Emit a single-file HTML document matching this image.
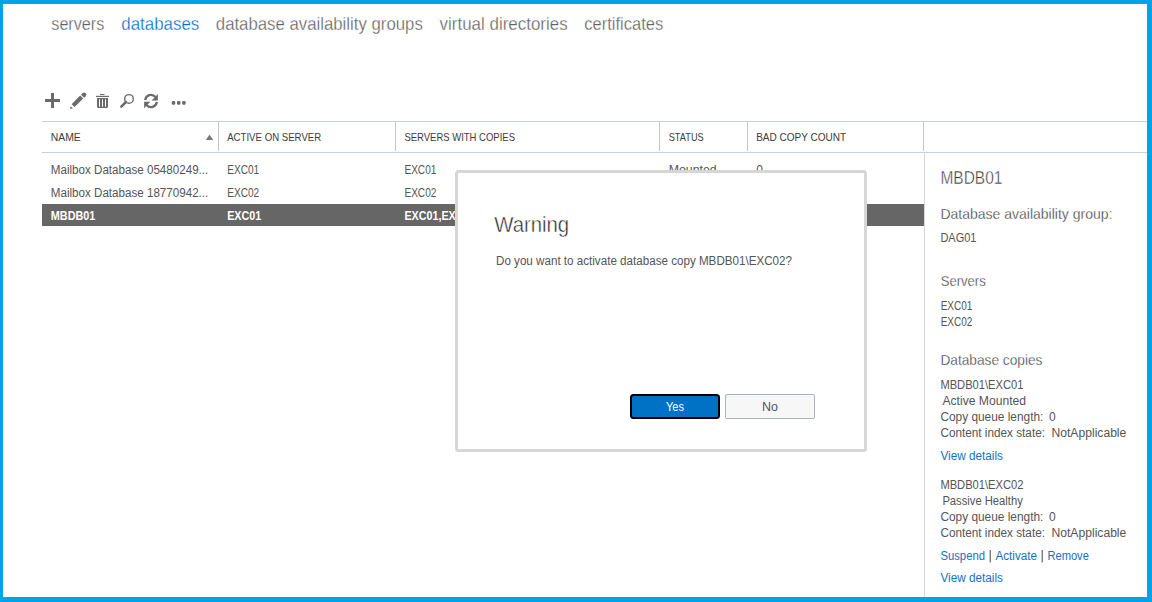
<!DOCTYPE html><html><head><meta charset="utf-8"><style>html,body{margin:0;padding:0;background:#fff;overflow:hidden}svg{display:block}text{font-family:"Liberation Sans",sans-serif;white-space:pre}</style></head><body>
<svg width="1152" height="602" viewBox="0 0 1152 602">
<rect x="0" y="0" width="1152" height="602" fill="#fff"/>
<text x="51.30" y="29.80" font-size="18" fill="#606060" stroke="#fff" stroke-width="0.3" textLength="53.01" lengthAdjust="spacingAndGlyphs" >servers</text>
<text x="121.25" y="29.80" font-size="18" fill="#006cc8" stroke="#fff" stroke-width="0.3" textLength="78.00" lengthAdjust="spacingAndGlyphs" >databases</text>
<text x="215.80" y="29.80" font-size="18" fill="#606060" stroke="#fff" stroke-width="0.3" textLength="207.01" lengthAdjust="spacingAndGlyphs" >database availability groups</text>
<text x="439.60" y="29.80" font-size="18" fill="#606060" stroke="#fff" stroke-width="0.3" textLength="128.00" lengthAdjust="spacingAndGlyphs" >virtual directories</text>
<text x="584.20" y="29.80" font-size="18" fill="#606060" stroke="#fff" stroke-width="0.3" textLength="79.01" lengthAdjust="spacingAndGlyphs" >certificates</text>
<g fill="#6b6b6b">
<rect x="45" y="99" width="15" height="3"/><rect x="51" y="93" width="3" height="15"/>
<path d="M70 109 L70.8 106.2 L72.8 108.2 Z"/>
<path d="M71.6 104.3 L80.1 95.6 L83.2 98.5 L74.6 107.1 Z"/>
<path d="M81.0 94.7 L82.4 93.3 A2.2 2.2 0 0 1 85.6 96.5 L84.1 97.8 Z"/>
<rect x="100" y="94" width="4.4" height="1"/><rect x="96" y="95.8" width="13" height="1.2"/>
<path d="M97 98 H108 V106.8 Q108 108 106.8 108 H98.2 Q97 108 97 106.8 Z M99 99.3 V106.7 H100 V99.3 Z M102 99.3 V106.7 H103 V99.3 Z M105 99.3 V106.7 H106 V99.3 Z" fill-rule="evenodd"/>
</g>
<circle cx="129" cy="98.9" r="4.3" fill="none" stroke="#6b6b6b" stroke-width="1.4"/>
<line x1="126" y1="102" x2="121.3" y2="106.6" stroke="#6b6b6b" stroke-width="2.5" stroke-linecap="round"/>
<g fill="none" stroke="#6b6b6b" stroke-width="2.3">
<path d="M145.2 100.2 A5.8 5.8 0 0 1 155.4 97"/>
<path d="M156.8 101.8 A5.8 5.8 0 0 1 146.6 105"/>
</g>
<g fill="#6b6b6b"><path d="M157.9 94 V100.5 H151.6 Z"/><path d="M144.1 108.2 V101.7 H150.4 Z"/></g>
<g fill="#6b6b6b"><rect x="171.8" y="101" width="3.4" height="3.8" rx="1.2"/><rect x="177" y="101" width="3.4" height="3.8" rx="1.2"/><rect x="182.2" y="101" width="3.4" height="3.8" rx="1.2"/></g>
<rect x="42" y="121" width="1105" height="1" fill="#c9d0d6"/>
<rect x="42" y="152" width="1105" height="1" fill="#c9d0d6"/>
<rect x="218" y="122" width="1" height="29" fill="#c6c6c6"/>
<rect x="395" y="122" width="1" height="29" fill="#c6c6c6"/>
<rect x="659" y="122" width="1" height="29" fill="#c6c6c6"/>
<rect x="747" y="122" width="1" height="29" fill="#c6c6c6"/>
<rect x="923" y="122" width="1" height="29" fill="#c6c6c6"/>
<rect x="924" y="153" width="1" height="449" fill="#d4d8dc"/>
<text x="50.80" y="141.00" font-size="11" fill="#3c3c3c" textLength="30.00" lengthAdjust="spacingAndGlyphs" >NAME</text>
<text x="227.20" y="141.00" font-size="11" fill="#3c3c3c" textLength="94.00" lengthAdjust="spacingAndGlyphs" >ACTIVE ON SERVER</text>
<text x="404.40" y="141.00" font-size="11" fill="#3c3c3c" textLength="110.60" lengthAdjust="spacingAndGlyphs" >SERVERS WITH COPIES</text>
<text x="668.70" y="141.00" font-size="11" fill="#3c3c3c" textLength="35.00" lengthAdjust="spacingAndGlyphs" >STATUS</text>
<text x="756.20" y="141.00" font-size="11" fill="#3c3c3c" textLength="90.00" lengthAdjust="spacingAndGlyphs" >BAD COPY COUNT</text>
<path d="M205.8 140 L209.5 134.4 L213.2 140 Z" fill="#7a7a7a"/>
<text x="50.80" y="173.75" font-size="12" fill="#555555" textLength="157.50" lengthAdjust="spacingAndGlyphs" >Mailbox Database 05480249...</text>
<text x="227.20" y="173.75" font-size="12" fill="#555555" textLength="32.00" lengthAdjust="spacingAndGlyphs" >EXC01</text>
<text x="404.40" y="173.75" font-size="12" fill="#555555" textLength="32.00" lengthAdjust="spacingAndGlyphs" >EXC01</text>
<text x="668.70" y="173.75" font-size="12" fill="#555555" textLength="48.00" lengthAdjust="spacingAndGlyphs" >Mounted</text>
<text x="756.20" y="173.75" font-size="12" fill="#555555" >0</text>
<text x="50.80" y="196.70" font-size="12" fill="#555555" textLength="157.50" lengthAdjust="spacingAndGlyphs" >Mailbox Database 18770942...</text>
<text x="227.20" y="196.70" font-size="12" fill="#555555" textLength="32.00" lengthAdjust="spacingAndGlyphs" >EXC02</text>
<text x="404.40" y="196.70" font-size="12" fill="#555555" textLength="32.00" lengthAdjust="spacingAndGlyphs" >EXC02</text>
<text x="668.70" y="196.70" font-size="12" fill="#555555" >Healthy</text>
<text x="756.20" y="196.70" font-size="12" fill="#555555" >0</text>
<rect x="42" y="204" width="882" height="22" fill="#666666"/>
<text x="50.80" y="219.60" font-size="12" fill="#fff" font-weight="bold" textLength="44.60" lengthAdjust="spacingAndGlyphs" >MBDB01</text>
<text x="227.20" y="219.60" font-size="12" fill="#fff" font-weight="bold" textLength="34.01" lengthAdjust="spacingAndGlyphs" >EXC01</text>
<text x="404.40" y="219.60" font-size="12" fill="#fff" font-weight="bold" textLength="71.00" lengthAdjust="spacingAndGlyphs" >EXC01,EXC02</text>
<text x="940.40" y="184.30" font-size="18" fill="#383838" stroke="#fff" stroke-width="0.4" textLength="61.99" lengthAdjust="spacingAndGlyphs" >MBDB01</text>
<text x="940.40" y="218.50" font-size="15" fill="#383838" stroke="#fff" stroke-width="0.3" textLength="172.00" lengthAdjust="spacingAndGlyphs" >Database availability group:</text>
<text x="940.40" y="242.20" font-size="12" fill="#555555" textLength="36.00" lengthAdjust="spacingAndGlyphs" >DAG01</text>
<text x="940.70" y="286.00" font-size="15" fill="#383838" stroke="#fff" stroke-width="0.3" textLength="45.00" lengthAdjust="spacingAndGlyphs" >Servers</text>
<text x="940.70" y="309.60" font-size="12" fill="#555555" textLength="31.70" lengthAdjust="spacingAndGlyphs" >EXC01</text>
<text x="940.70" y="325.60" font-size="12" fill="#555555" textLength="31.70" lengthAdjust="spacingAndGlyphs" >EXC02</text>
<text x="940.40" y="364.90" font-size="15" fill="#383838" stroke="#fff" stroke-width="0.3" textLength="102.00" lengthAdjust="spacingAndGlyphs" >Database copies</text>
<text x="940.40" y="388.80" font-size="12" fill="#555555" textLength="83.00" lengthAdjust="spacingAndGlyphs" >MBDB01\EXC01</text>
<text x="942.40" y="404.80" font-size="12" fill="#555555" textLength="83.70" lengthAdjust="spacingAndGlyphs" >Active Mounted</text>
<text x="940.40" y="420.80" font-size="12" fill="#555555" textLength="103.00" lengthAdjust="spacingAndGlyphs" >Copy queue length:</text>
<text x="1049.00" y="420.80" font-size="12" fill="#555555" >0</text>
<text x="940.40" y="436.80" font-size="12" fill="#555555" textLength="104.59" lengthAdjust="spacingAndGlyphs" >Content index state:</text>
<text x="1051.50" y="436.80" font-size="12" fill="#555555" textLength="74.81" lengthAdjust="spacingAndGlyphs" >NotApplicable</text>
<text x="940.40" y="489.00" font-size="12" fill="#555555" textLength="83.00" lengthAdjust="spacingAndGlyphs" >MBDB01\EXC02</text>
<text x="942.40" y="505.00" font-size="12" fill="#555555" textLength="80.40" lengthAdjust="spacingAndGlyphs" >Passive Healthy</text>
<text x="940.40" y="521.00" font-size="12" fill="#555555" textLength="103.00" lengthAdjust="spacingAndGlyphs" >Copy queue length:</text>
<text x="1049.00" y="521.00" font-size="12" fill="#555555" >0</text>
<text x="940.40" y="537.00" font-size="12" fill="#555555" textLength="104.59" lengthAdjust="spacingAndGlyphs" >Content index state:</text>
<text x="1051.50" y="537.00" font-size="12" fill="#555555" textLength="74.81" lengthAdjust="spacingAndGlyphs" >NotApplicable</text>
<text x="940.40" y="459.60" font-size="12" fill="#1670c4" textLength="62.50" lengthAdjust="spacingAndGlyphs" >View details</text>
<text x="940.40" y="559.70" font-size="12" fill="#1670c4" textLength="44.60" lengthAdjust="spacingAndGlyphs" >Suspend</text>
<rect x="989.7" y="550" width="1" height="12.5" fill="#3a4a5a"/>
<text x="995.40" y="559.70" font-size="12" fill="#1670c4" textLength="41.60" lengthAdjust="spacingAndGlyphs" >Activate</text>
<rect x="1041.7" y="550" width="1" height="12.5" fill="#3a4a5a"/>
<text x="1047.40" y="559.70" font-size="12" fill="#1670c4" textLength="41.50" lengthAdjust="spacingAndGlyphs" >Remove</text>
<text x="940.40" y="582.20" font-size="12" fill="#1670c4" textLength="62.50" lengthAdjust="spacingAndGlyphs" >View details</text>
<rect x="456.5" y="171.5" width="409" height="279" rx="2" fill="#fff" stroke="#d6d6d6" stroke-width="3"/>
<text x="494.20" y="232.00" font-size="22" fill="#2a2a2a" stroke="#fff" stroke-width="0.45" textLength="74.99" lengthAdjust="spacingAndGlyphs" >Warning</text>
<text x="496.00" y="265.30" font-size="12" fill="#555" textLength="296.00" lengthAdjust="spacingAndGlyphs" >Do you want to activate database copy MBDB01\EXC02?</text>
<rect x="631" y="395" width="88" height="23" rx="2.5" fill="#0072c6" stroke="#000" stroke-width="2"/>
<text x="666.00" y="411.00" font-size="13" fill="#fff" textLength="18.00" lengthAdjust="spacingAndGlyphs" >Yes</text>
<rect x="725.5" y="394.5" width="89" height="24" rx="1.5" fill="#f7f7f7" stroke="#a9b3b8" stroke-width="1"/>
<text x="762.00" y="411.00" font-size="13" fill="#555" textLength="16.00" lengthAdjust="spacingAndGlyphs" >No</text>
<rect x="0" y="0" width="1152" height="4" fill="#00a2e8"/>
<rect x="0" y="0" width="3" height="602" fill="#00a2e8"/>
<rect x="1147" y="0" width="5" height="602" fill="#00a2e8"/>
<rect x="0" y="597" width="1152" height="5" fill="#00a2e8"/>
</svg></body></html>
